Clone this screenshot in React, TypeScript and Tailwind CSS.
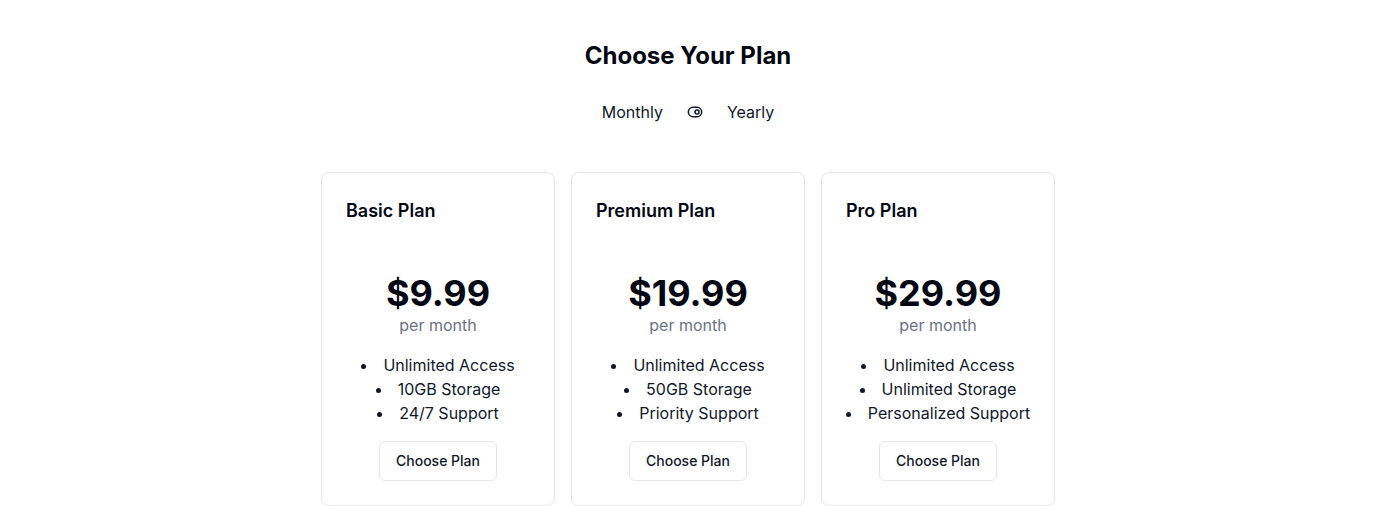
import { ToggleRight } from "lucide-react";

const plans = [
  {
    name: "Basic Plan",
    price: "$9.99",
    features: ["Unlimited Access", "10GB Storage", "24/7 Support"],
  },
  {
    name: "Premium Plan",
    price: "$19.99",
    features: ["Unlimited Access", "50GB Storage", "Priority Support"],
  },
  {
    name: "Pro Plan",
    price: "$29.99",
    features: ["Unlimited Access", "Unlimited Storage", "Personalized Support"],
  },
];

export default function App() {
  return (
    <div
      className="min-h-screen w-full bg-white text-gray-950"
      style={{ fontFamily: "Inter, 'Noto Sans', sans-serif" }}
    >
      <div className="flex flex-col items-center pt-10">
        {/* Title */}
        <h1 className="text-2xl font-bold">Choose Your Plan</h1>

        {/* Billing toggle */}
        <div className="mt-7 flex items-center gap-6 text-base text-gray-900">
          <span>Monthly</span>
          <ToggleRight className="h-4 w-4" strokeWidth={2.25} />
          <span>Yearly</span>
        </div>

        {/* Plans */}
        <div className="mt-12 grid grid-cols-3 gap-4">
          {plans.map((plan) => (
            <div
              key={plan.name}
              className="w-[234px] rounded-lg border border-gray-200 bg-white"
            >
              <div className="p-6">
                <h3 className="text-lg leading-7 font-semibold">{plan.name}</h3>
              </div>
              <div className="flex flex-col items-center px-6 pt-6 pb-6">
                <div className="text-4xl leading-10 font-bold">{plan.price}</div>
                <div className="text-base text-gray-500">per month</div>
                <ul className="mt-4 list-inside list-disc text-center text-base leading-6 whitespace-nowrap text-gray-900">
                  {plan.features.map((f) => (
                    <li key={f}>{f}</li>
                  ))}
                </ul>
                <button className="mt-4 h-10 rounded-md border border-gray-200 bg-white px-4 text-sm font-medium text-gray-900">
                  Choose Plan
                </button>
              </div>
            </div>
          ))}
        </div>
      </div>
    </div>
  );
}
